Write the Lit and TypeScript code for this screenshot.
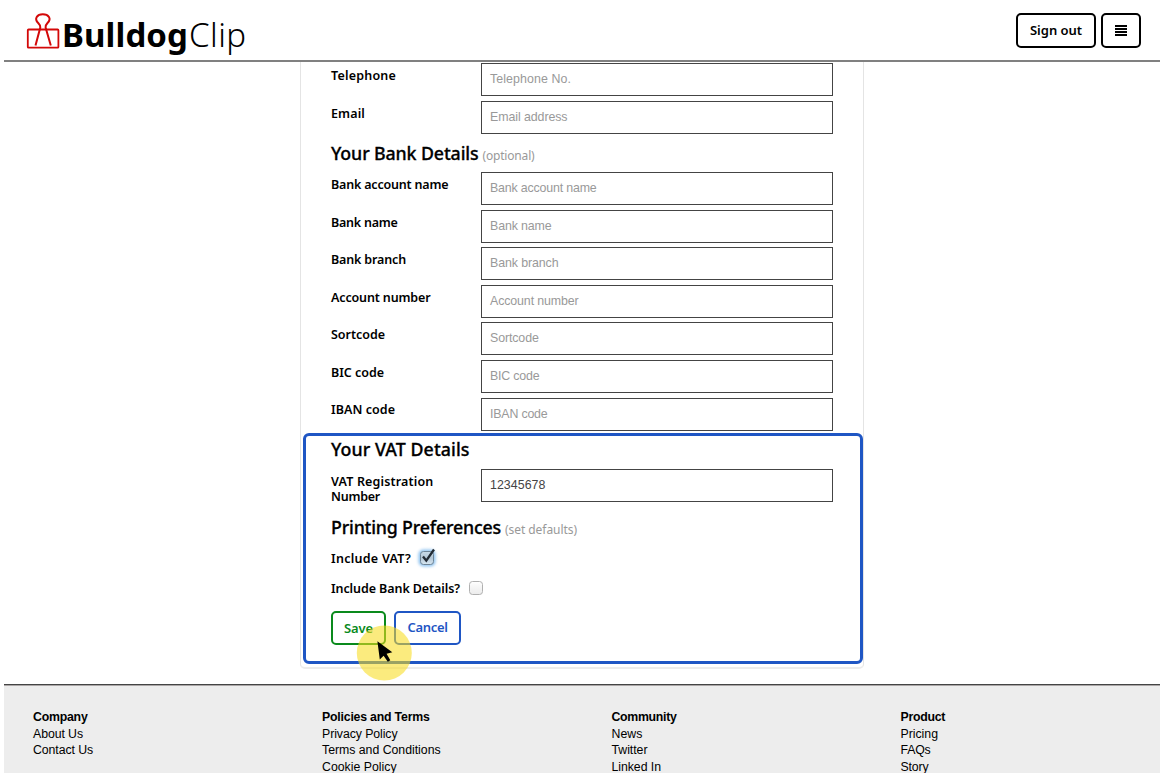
import { LitElement, html, svg, css, nothing } from "lit";
import { customElement, property } from "lit/decorators.js";

/** Text run whose tracking is adjusted so that it spans a given width. */
@customElement("fit-text")
class FitText extends LitElement {
  @property() text = "";
  @property({ type: Number }) w = 0;

  static styles = css`
    :host { display: inline-block; white-space: pre; }
    .run { display: inline-block; }
  `;

  render() {
    return html`<span class="run">${this.text}</span>`;
  }

  updated() {
    const run = this.renderRoot.querySelector(".run") as HTMLElement;
    run.style.letterSpacing = "0px";
    const natural = run.getBoundingClientRect().width;
    run.style.letterSpacing = `${(this.w - natural) / this.text.length}px`;
  }
}

type Field = [label: string, width: number, hint: string, hintWidth: number];

const contact: Field[] = [
  ["Telephone", 65, "Telephone No.", 81],
  ["Email", 34, "Email address", 77.5],
];

const bank: Field[] = [
  ["Bank account name", 117.4, "Bank account name", 106.6],
  ["Bank name", 66.6, "Bank name", 61.5],
  ["Bank branch", 75, "Bank branch", 68.5],
  ["Account number", 99.5, "Account number", 88.6],
  ["Sortcode", 54, "Sortcode", 48.7],
  ["BIC code", 53, "BIC code", 49.5],
  ["IBAN code", 64, "IBAN code", 57.5],
];

const footer: [string, number][][] = [
  [["Company", 54.5], ["About Us", 50], ["Contact Us", 60]],
  [["Policies and Terms", 107.6], ["Privacy Policy", 75.5], ["Terms and Conditions", 118.6], ["Cookie Policy", 74.7]],
  [["Community", 65], ["News", 31], ["Twitter", 36], ["Linked In", 49.5]],
  [["Product", 44.7], ["Pricing", 37.5], ["FAQs", 30], ["Story", 28]],
];

@customElement("app-root")
class AppRoot extends LitElement {
  static styles = css`
    * { box-sizing: border-box; }
    :host {
      box-sizing: border-box;
      display: flex;
      flex-direction: column;
      position: relative;
      width: 1160px;
      height: 773px;
      overflow: hidden;
      padding-left: 4px;
      background: #fff;
      color: #000;
      font-family: "Noto Sans", "Open Sans", sans-serif;
    }
    header {
      flex: none;
      display: flex;
      justify-content: space-between;
      height: 62px;
      padding: 13px 19px 0 22px;
      border-bottom: 2px solid #808080;
    }
    .brand { display: flex; font-size: 33px; line-height: 44px; }
    .brand svg { flex: none; width: 37px; height: 37px; }
    .bold { font-weight: 700; margin-left: -1px; }
    .light { font-weight: 300; margin-left: 1px; }
    .tools { display: flex; gap: 5px; }
    .btn {
      display: flex;
      align-items: center;
      justify-content: center;
      border: 2px solid;
      border-radius: 5px;
      font-size: 13px;
      font-weight: 600;
      line-height: 18px;
    }
    .sign { width: 80px; height: 35px; padding-bottom: 2px; }
    .menu { width: 40px; height: 35px; }
    .card {
      flex: none;
      width: 564px;
      height: 607px;
      margin-left: 296px;
      padding: 1.4px 29px 0 30px;
      border: 1px solid #e4e4e4;
      border-top: 0;
      border-bottom: 2px solid #ececec;
      border-radius: 0 0 5px 5px;
    }
    .row { display: grid; grid-template-columns: 150px 352px; height: 37.55px; }
    .label { font-size: 12.5px; font-weight: 600; line-height: 15px; padding-top: 4.9px; }
    .label fit-text { display: block; }
    .input {
      height: 33px;
      border: 1px solid #444;
      padding: 7px 8px 0;
      font: 12.4px/16px "Liberation Sans", Arial, sans-serif;
      color: #999;
    }
    .input.filled { color: #444; }
    h2 {
      display: flex;
      align-items: baseline;
      gap: 4px;
      margin: 0;
      height: 33.8px;
      padding-top: 3px;
      font-size: 17.8px;
      line-height: 24px;
      font-weight: 500;
      -webkit-text-stroke: 0.3px #000;
    }
    h2.tax { padding-top: 1.4px; }
    h2.print { height: 34px; padding-top: 9px; }
    small { font-size: 12px; font-weight: 400; color: #999; -webkit-text-stroke: 0; }
    .check { display: flex; height: 29.5px; font-size: 12.5px; font-weight: 600; line-height: 18px; padding-top: 10px; }
    .box { flex: none; width: 26px; height: 26px; margin: -5px 0 0 3px; }
    .actions { display: flex; gap: 8px; margin-top: 11.5px; }
    .save { width: 55px; height: 34px; color: #0a8a1c; padding-top: 1px; }
    .cancel { width: 67px; height: 34px; color: #1f56c4; padding-bottom: 1px; }
    .focus {
      position: absolute;
      left: 303px;
      top: 432.5px;
      width: 560px;
      height: 231px;
      border: 3px solid #1f56c4;
      border-radius: 6px;
    }
    .pointer { position: absolute; left: 356px; top: 625px; width: 56px; height: 56px; }
    footer {
      flex: 1;
      display: grid;
      grid-template-columns: 289px 289.5px 289px 1fr;
      margin-top: 15px;
      padding: 23.8px 0 0 29px;
      border-top: 1px solid #444;
      box-shadow: inset 0 1px #aaa6a6;
      background: #ededed;
      font: 12.3px/16.8px "Liberation Sans", Arial, sans-serif;
    }
    footer fit-text { display: block; }
    footer .head { font-weight: 700; }
  `;

  field([label, width, hint, hintWidth]: Field) {
    return html`<div class="row">
      <div class="label"><fit-text .text=${label} .w=${width}></fit-text></div>
      <div class="input"><fit-text .text=${hint} .w=${hintWidth}></fit-text></div>
    </div>`;
  }

  checkbox(on: boolean) {
    const fill = on ? "fill-on" : "fill-off";
    return html`<svg class="box" viewBox="0 0 26 26">
      <defs>
        <linearGradient id=${fill} x2="0" y2="1">
          <stop offset="0" stop-color=${on ? "#c9dcea" : "#fff"} />
          <stop offset=".5" stop-color=${on ? "#b3c6d6" : "#f4f4f4"} />
          <stop offset="1" stop-color=${on ? "#d8e8f2" : "#ececec"} />
        </linearGradient>
      </defs>
      ${on ? svg`<rect x="4.5" y="4.5" width="17" height="17" rx="5" fill="#8fc3f0" style="filter:blur(1.6px)" />` : nothing}
      <rect x="6.5" y="6.5" width="13" height="13" rx="3" fill="url(#${fill})" stroke=${on ? "#6e8496" : "#b0b0b0"} />
      ${on ? svg`<path d="M9 11.5 12.3 15.6 20 4.5" fill="none" stroke="#222b35" stroke-width="2.3" />` : nothing}
    </svg>`;
  }

  render() {
    return html`
      <header>
        <div class="brand">
          <svg viewBox="26 13 37 37" fill="none" stroke="#d30808" stroke-width="1.8">
            <rect x="27.8" y="29.5" width="30.6" height="18.2" rx=".8" />
            <path d="M35.5 45.5 40.3 27.6C40.7 25.4 40 24.8 38.2 23 33.8 18.5 37.2 14.2 42.8 14.2S52 18.5 47.5 23C45.7 24.8 45.1 25.4 45.6 27.6L50.8 45.5" stroke-width="2" />
          </svg>
          <fit-text class="bold" .text=${"Bulldog"} .w=${126}></fit-text>
          <fit-text class="light" .text=${"Clip"} .w=${57.5}></fit-text>
        </div>
        <div class="tools">
          <div class="btn sign"><fit-text .text=${"Sign out"} .w=${52}></fit-text></div>
          <div class="btn menu">
            <svg width="12" height="12"><path d="M0 1h12M0 4h12M0 7h12M0 10h12" stroke="#000" stroke-width="2" /></svg>
          </div>
        </div>
      </header>
      <section class="card">
        ${contact.map((f) => this.field(f))}
        <h2><fit-text .text=${"Your Bank Details"} .w=${147.5}></fit-text><small><fit-text .text=${"(optional)"} .w=${52}></fit-text></small></h2>
        ${bank.map((f) => this.field(f))}
        <h2 class="tax"><fit-text .text=${"Your VAT Details"} .w=${138.5}></fit-text></h2>
        <div class="row">
          <div class="label">
            <fit-text .text=${"VAT Registration"} .w=${102.5}></fit-text>
            <fit-text .text=${"Number"} .w=${49}></fit-text>
          </div>
          <div class="input filled"><fit-text .text=${"12345678"} .w=${55.5}></fit-text></div>
        </div>
        <h2 class="print"><fit-text .text=${"Printing Preferences"} .w=${170}></fit-text><small><fit-text .text=${"(set defaults)"} .w=${72}></fit-text></small></h2>
        <div class="check"><fit-text .text=${"Include VAT?"} .w=${80}></fit-text>${this.checkbox(true)}</div>
        <div class="check"><fit-text .text=${"Include Bank Details?"} .w=${129}></fit-text>${this.checkbox(false)}</div>
        <div class="actions">
          <div class="btn save"><fit-text .text=${"Save"} .w=${29}></fit-text></div>
          <div class="btn cancel"><fit-text .text=${"Cancel"} .w=${40}></fit-text></div>
        </div>
      </section>
      <footer>
        ${footer.map((col) => html`<div>
          ${col.map(([t, w], i) => html`<fit-text class=${i ? "" : "head"} .text=${t} .w=${w}></fit-text>`)}
        </div>`)}
      </footer>
      <div class="focus"></div>
      <svg class="pointer" viewBox="356 625 56 56">
        <circle cx="384.3" cy="653" r="27.5" fill="#f8dc1c" fill-opacity=".57" />
        <path d="M377.4 641.2 379.8 659.6 383.6 655.7 387.8 661.8 390.3 660.3 386.6 653.8 392.3 652.2Z" fill="#000" />
      </svg>
    `;
  }
}
